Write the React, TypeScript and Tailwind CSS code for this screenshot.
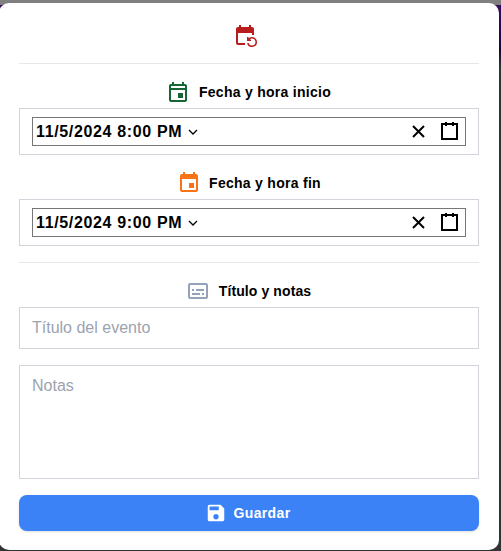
import type { ReactNode } from "react";
import { MdEvent, MdEventRepeat, MdOutlineEvent, MdOutlineSubtitles, MdSave } from "react-icons/md";

function Heading({ icon, tracking, children }: { icon: ReactNode; tracking: string; children: ReactNode }) {
  return (
    <div className={`flex h-8 items-center justify-center gap-2 text-sm font-bold ${tracking}`}>
      {icon}
      <span>{children}</span>
    </div>
  );
}

function DateField({ value }: { value: string }) {
  return (
    <div className="h-[47px] border border-[#d1d5db] px-3 py-2">
      <div className="flex h-[29px] items-center border border-[#767676] pr-[7px] pl-[3px]">
        <span className="text-base font-bold tracking-[0.65px] whitespace-pre">{value}</span>
        <svg className="ml-[6px] h-[6px] w-[10px]" viewBox="0 0 10 6" fill="none" stroke="black" strokeWidth="1.3">
          <path d="M1 1l4 4 4-4" />
        </svg>
        <svg className="mr-4 ml-auto h-[13px] w-[13px]" viewBox="0 0 13 13" fill="none" stroke="black" strokeWidth="2">
          <path d="M1 1l11 11M12 1L1 12" />
        </svg>
        <svg className="mb-px h-[18px] w-[17px]" viewBox="0 0 17 18" fill="none" stroke="black" strokeWidth="2">
          <path d="M1 2h15v15H1zM5 0v4M12 0v4" />
        </svg>
      </div>
    </div>
  );
}

export default function App() {
  return (
    <div className="h-[551px] w-[501px] overflow-hidden bg-[linear-gradient(to_bottom,#808080_0px,#808080_5px,#35105f_5px,#1b0535_50px,#333333_68px,#333333_100%)] pt-[3px] font-['Liberation_Sans',Arial,sans-serif] text-black">
      <div className="-ml-px flex h-[547px] w-[500px] flex-col rounded-[10px] bg-white px-5">
        <div className="flex h-[61px] shrink-0 items-center justify-center border-b border-[#e5e7eb] pt-1 pr-2">
          <MdEventRepeat className="size-6 text-[#b91c1c]" />
        </div>
        <div className="pt-3">
          <Heading tracking="tracking-[0.28px]" icon={<MdOutlineEvent className="-ml-px mr-px size-6 text-[#166534]" />}>
            Fecha y hora inicio
          </Heading>
          <DateField value="11/5/2024 8:00 PM" />
        </div>
        <div className="pt-3">
          <Heading tracking="tracking-[0.28px]" icon={<MdEvent className="size-6 text-[#f97316]" />}>
            Fecha y hora fin
          </Heading>
          <DateField value="11/5/2024 9:00 PM" />
        </div>
        <hr className="mt-4 border-[#e5e7eb]" />
        <div className="pt-3">
          <Heading tracking="tracking-[0.1px]" icon={<MdOutlineSubtitles className="-ml-px mr-px size-6 text-[#94a3b8]" />}>
            Título y notas
          </Heading>
          <input
            className="block h-[42px] w-full border border-[#d1d5db] px-3 text-base outline-none placeholder:text-[#9ca3af]"
            placeholder="Título del evento"
          />
          <textarea
            className="mt-4 block h-[114px] w-full resize-none border border-[#d1d5db] px-3 py-2 text-base outline-none placeholder:text-[#9ca3af]"
            placeholder="Notas"
          />
        </div>
        <button className="mt-4 flex h-9 w-full shrink-0 items-center justify-center gap-1.5 rounded-lg bg-[#3b82f6] pr-0.5 text-sm font-bold tracking-wide text-white shadow-sm">
          <MdSave className="-ml-px mr-px size-[22px]" />
          Guardar
        </button>
      </div>
    </div>
  );
}
